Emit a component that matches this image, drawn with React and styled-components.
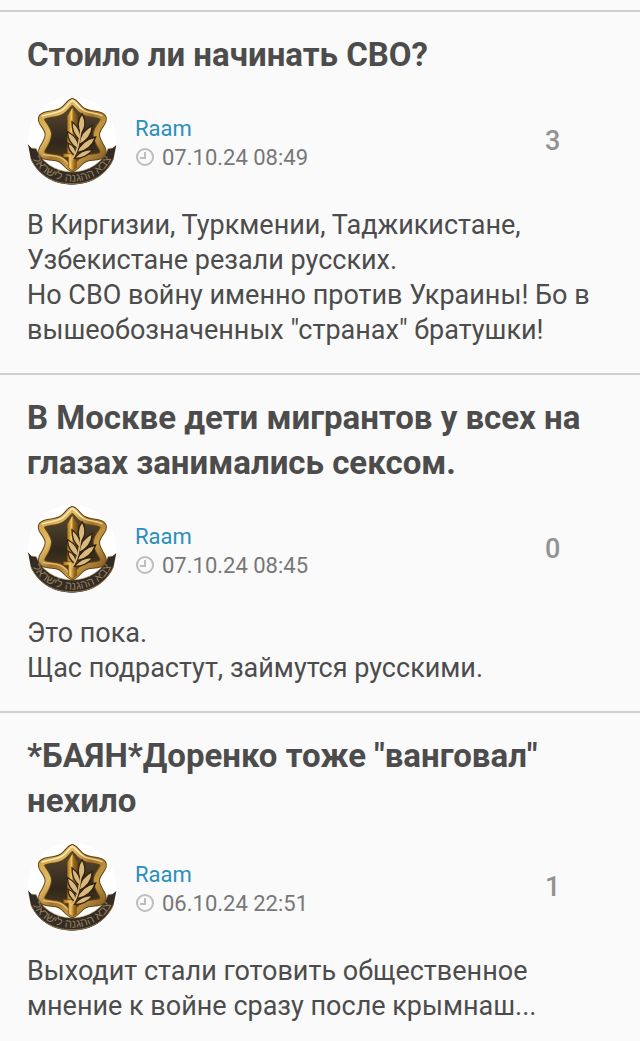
import styled, { createGlobalStyle } from 'styled-components'

const GlobalStyle = createGlobalStyle`
  body {
    margin: 0;
    background-color: #fafafa;
    color: #4c4c4c;
    font-family: Roboto, 'Noto Sans', sans-serif;
  }
`

const Feed = styled.main`
  padding-top: 10px;
`

const Post = styled.article`
  border-top: 2px solid #cfcfcf;
  padding: 20px 27px 25px;
`

const Title = styled.h2`
  margin: 0;
  font-size: 33px;
  line-height: 45px;
  font-weight: 700;
`

const Meta = styled.div`
  display: flex;
  align-items: center;
  gap: 18px;
  margin: 19px 0 22px;
`

const Avatar = styled.svg`
  flex: none;
  width: 90px;
  height: 90px;
  overflow: visible;
`

const Info = styled.div`
  flex: 1;
  padding-top: 4px;
  font-size: 22px;
  line-height: 29px;
`

const Author = styled.a`
  display: block;
  width: fit-content;
  color: #2a8fbd;
  text-decoration: none;
`

const PostTime = styled.div`
  display: flex;
  align-items: center;
  gap: 7px;
  color: #777;
`

const Clock = styled.svg`
  width: 20px;
  height: 20px;
  fill: none;
  stroke: #bdbdbd;
  stroke-width: 2;
`

const Count = styled.span`
  width: 68px;
  font-size: 27px;
  line-height: 35px;
  font-weight: 500;
  color: #929292;
`

const Body = styled.p`
  margin: 0;
  font-size: 27px;
  line-height: 35px;
  white-space: pre-line;
`

const posts = [
  {
    id: 1,
    title: 'Стоило ли начинать СВО?',
    time: '07.10.24 08:49',
    count: 3,
    text: 'В Киргизии, Туркмении, Таджикистане, Узбекистане резали русских.\nНо СВО войну именно против Украины! Бо в вышеобозначенных "странах" братушки!',
  },
  {
    id: 2,
    title: 'В Москве дети мигрантов у всех на глазах занимались сексом.',
    time: '07.10.24 08:45',
    count: 0,
    text: 'Это пока.\nЩас подрастут, займутся русскими.',
  },
  {
    id: 3,
    title: '*БАЯН*Доренко тоже "ванговал" нехило',
    time: '06.10.24 22:51',
    count: 1,
    text: 'Выходит стали готовить общественное мнение к войне сразу после крымнаш...',
  },
]

const shield =
  'M157 38 C168 42 174 58 188 66 C206 77 226 74 241 80 C251 84 252 92 246 101 C236 115 229 124 229 136 C229 150 237 164 246 178 C252 189 249 198 239 201 C222 206 208 202 193 210 C178 218 170 234 157 239 C144 234 136 218 121 210 C106 202 92 206 75 201 C65 198 62 189 68 178 C77 164 85 150 85 136 C85 124 78 115 68 101 C62 92 63 84 73 80 C88 74 108 77 126 66 C140 58 146 42 157 38 Z'

function Emblem({ id }) {
  const gold = 'gold-' + id
  const blade = 'blade-' + id
  const field = 'field-' + id
  const arc = 'arc-' + id
  return (
    <Avatar viewBox="21 21 270 270" aria-hidden="true">
      <defs>
        <linearGradient id={gold} x1="0" y1="0" x2="1" y2="1">
          <stop offset="0" stopColor="#c99b3c" />
          <stop offset="0.3" stopColor="#e3bd68" />
          <stop offset="0.5" stopColor="#a3742a" />
          <stop offset="0.7" stopColor="#c79a45" />
          <stop offset="1" stopColor="#76501c" />
        </linearGradient>
        <linearGradient id={blade} x1="0" y1="0" x2="1" y2="0">
          <stop offset="0" stopColor="#a96e18" />
          <stop offset="0.4" stopColor="#f0c55f" />
          <stop offset="0.6" stopColor="#9b681c" />
          <stop offset="1" stopColor="#6f4a17" />
        </linearGradient>
        <linearGradient id={field} x1="0" y1="0" x2="0" y2="1">
          <stop offset="0" stopColor="#5c4d35" />
          <stop offset="0.6" stopColor="#30271b" />
          <stop offset="1" stopColor="#54411f" />
        </linearGradient>
      </defs>
      <circle cx="156" cy="156" r="133" fill="#fff" />
      <path
        d="M24 166 L34 177 L49 179 C64 220 106 248 156 249 C207 248 249 220 264 179 L278 177 L289 168 L281 208 C262 256 215 287 156 287 C98 287 51 256 32 208 Z"
        fill="#342c24"
      />
      <path d="M34 177 L49 179 C64 220 106 248 156 249 C207 248 249 220 264 179 L278 177" fill="none" stroke="#b7995f" strokeWidth="2" />
      <path d="M33 210 C54 256 98 284 156 284 C215 284 259 256 280 210" fill="none" stroke="#8a714a" strokeWidth="3" />
      <path d={shield} fill={'url(#' + field + ')'} stroke="#654515" strokeWidth="22" strokeLinejoin="round" />
      <path d={shield} fill="none" stroke={'url(#' + gold + ')'} strokeWidth="16" strokeLinejoin="round" />
      <path d="M67 81 C90 73 110 74 128 62 C142 53 147 38 157 34 C167 38 174 54 190 63" fill="none" stroke="#fff0c4" strokeWidth="4" strokeLinecap="round" />
      <path d="M190 64 C208 74 228 70 246 80" fill="none" stroke="#ecd08a" strokeWidth="4" strokeLinecap="round" />
      <path d="M70 196 C92 202 112 197 128 209 C142 219 148 232 157 236" fill="none" stroke="#e2bf78" strokeWidth="4" strokeLinecap="round" />
      <path d="M142 82 L157 56 L173 82 V194 H142 Z" fill={'url(#' + blade + ')'} />
      <path d="M130 194 H184 V205 H169 V236 L157 245 L145 236 V205 H130 Z" fill={'url(#' + blade + ')'} stroke="#6b4512" strokeWidth="2" />
      <g fill="#d9b87e" stroke="#30220f" strokeWidth="4">
        <path d="M186 74 C199 97 196 120 181 136 C172 115 173 93 186 74 Z" />
        <path d="M156 98 C175 112 184 132 179 152 C162 139 155 121 156 98 Z" />
        <path d="M217 110 C215 139 200 157 177 167 C179 140 193 121 217 110 Z" />
        <path d="M142 128 C164 139 178 158 174 180 C154 168 143 150 142 128 Z" />
        <path d="M227 144 C217 171 197 187 171 191 C179 166 200 150 227 144 Z" />
        <path d="M144 162 C160 169 170 184 168 202 C153 193 144 179 144 162 Z" />
        <path d="M219 182 C205 199 186 209 163 208 C177 190 196 181 219 182 Z" />
      </g>
      <path d="M184 116 C177 152 177 190 149 218" fill="none" stroke="#dcb878" strokeWidth="5" strokeLinecap="round" />
      <path id={arc} d="M34 200 C52 248 101 278 156 278 C211 278 260 248 278 200" fill="none" />
      <text fill="#8f7c5b" fontFamily="Liberation Sans, DejaVu Sans, sans-serif" fontSize="35" textAnchor="middle">
        <textPath href={'#' + arc} startOffset="50%">צבא ההגנה לישראל</textPath>
      </text>
    </Avatar>
  )
}

function PostItem({ id, title, time, count, text }) {
  return (
    <Post>
      <Title>{title}</Title>
      <Meta>
        <Emblem id={id} />
        <Info>
          <Author href="#">Raam</Author>
          <PostTime>
            <Clock viewBox="0 0 20 20" aria-hidden="true">
              <circle cx="10" cy="9" r="8" />
              <path d="M10 4 V10 H5" />
            </Clock>
            <time>{time}</time>
          </PostTime>
        </Info>
        <Count>{count}</Count>
      </Meta>
      <Body>{text}</Body>
    </Post>
  )
}

export default function App() {
  return (
    <>
      <GlobalStyle />
      <Feed>
        {posts.map((post) => (
          <PostItem key={post.id} {...post} />
        ))}
      </Feed>
    </>
  )
}
